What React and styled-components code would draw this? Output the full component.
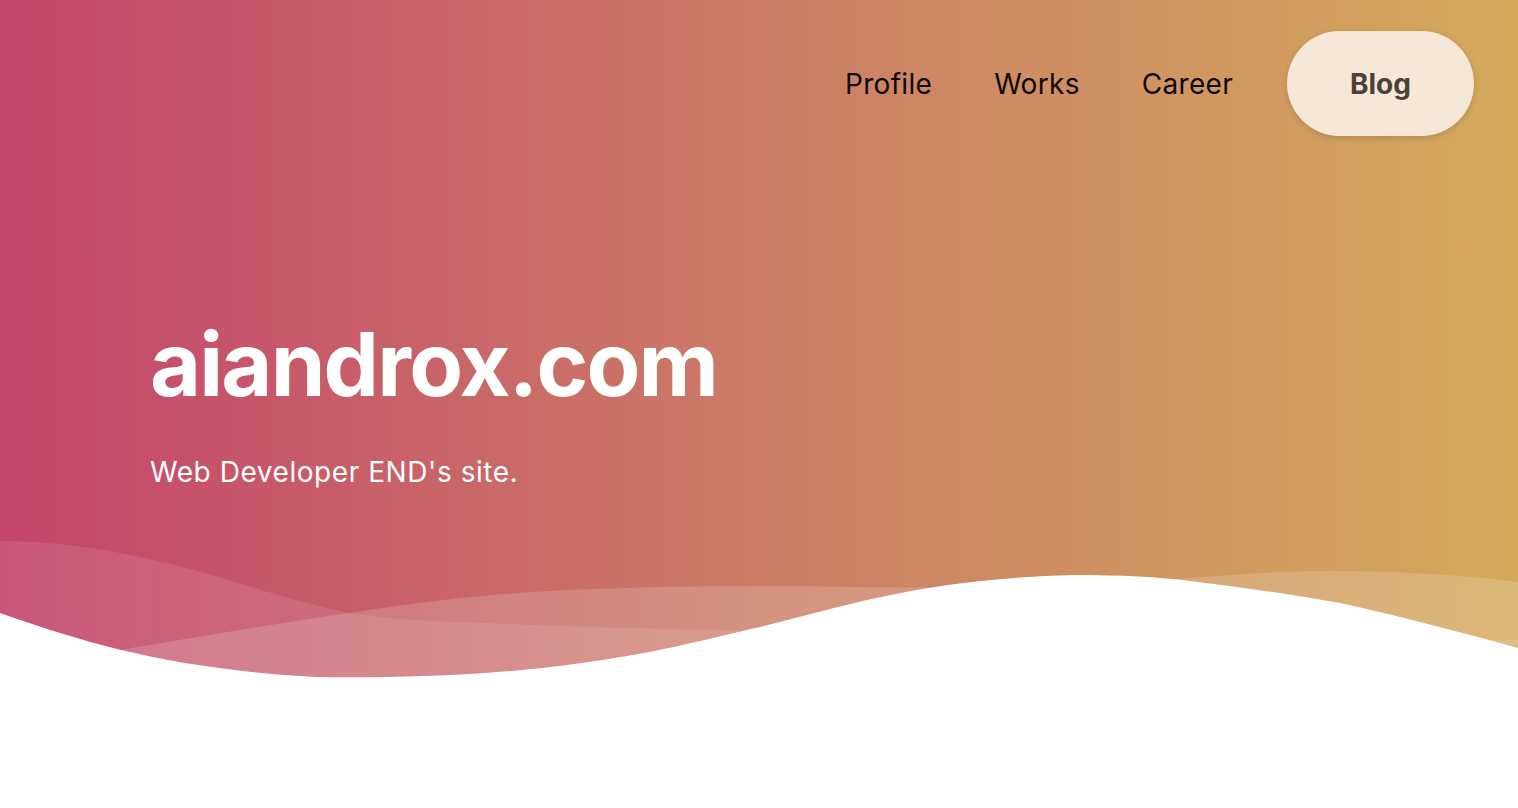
import React from 'react';
import styled, { createGlobalStyle } from 'styled-components';

const GlobalStyle = createGlobalStyle`
  body {
    margin: 0;
    background: #ffffff;
    font-family: Inter, "Noto Sans", sans-serif;
  }
`;

const Hero = styled.section`
  position: relative;
  height: 680px;
  background: linear-gradient(90deg, #c4446b 0%, #cc7c66 50%, #d4aa5c 100%);
  overflow: hidden;
`;

const Header = styled.header`
  display: flex;
  justify-content: flex-end;
  align-items: center;
  padding: 31px 44px 0 0;
`;

const Nav = styled.nav`
  display: flex;
  align-items: center;
`;

const NavLink = styled.a`
  font-size: 28px;
  line-height: 1;
  letter-spacing: 0.3px;
  color: #0a0a0a;
  text-decoration: none;
  padding: 0 31px;
`;

const BlogButton = styled.a`
  display: flex;
  align-items: center;
  justify-content: center;
  height: 105px;
  width: 187px;
  margin-left: 23px;
  border-radius: 53px;
  background: #f5e8d8;
  color: #4a4238;
  font-size: 28px;
  font-weight: 700;
  text-decoration: none;
  box-shadow: 0 2px 6px rgba(0, 0, 0, 0.15);
`;

const Intro = styled.div`
  margin-top: 184px;
  padding-left: 150px;
  color: #fff;
`;

const Title = styled.h1`
  margin: 0;
  font-size: 88px;
  line-height: 1;
  font-weight: 700;
  letter-spacing: -1.8px;
`;

const Lead = styled.p`
  margin: 50px 0 0;
  font-size: 28px;
  line-height: 1;
  letter-spacing: 0.55px;
`;

const Waves = styled.svg`
  position: absolute;
  left: 0;
  bottom: 0;
  width: 100%;
  height: 140px;
  display: block;
`;

const App = () => {
  return (
    <>
      <GlobalStyle />
      <Hero>
        <Header>
          <Nav>
            <NavLink href="#profile">Profile</NavLink>
            <NavLink href="#works">Works</NavLink>
            <NavLink href="#career">Career</NavLink>
            <BlogButton href="#blog">Blog</BlogButton>
          </Nav>
        </Header>

        <Intro>
          <Title>aiandrox.com</Title>
          <Lead>Web Developer END's site.</Lead>
        </Intro>

        {/* 波 */}
        <Waves viewBox="0 540 1518 140" preserveAspectRatio="none">
          <path
            fill="#fff"
            fillOpacity="0.1"
            d="M0,541 C60,541 130,552 194,570 C250,586 300,603 349,613 C400,620 440,622 485,623 C560,626 680,630 760,630 L1518,640 L1518,700 L0,700 Z"
          />
          <path
            fill="#fff"
            fillOpacity="0.17"
            d="M0,675 L121,650 C200,636 300,620 349,613 C420,602 480,595 533,592 C620,587 700,586 760,586 C850,586 950,590 1074,586 C1180,580 1260,570 1340,571 C1420,572 1470,576 1518,582 L1518,700 L0,700 Z"
          />
          <path
            fill="#fff"
            d="M0,613 C40,627 80,640 121,650 C180,664 250,674 315,677 C380,678 440,676 485,673 C560,668 620,658 674,647 C700,641 730,634 760,627 C800,617 840,606 876,598 C940,584 1000,577 1074,575 C1120,575 1160,577 1190,581 C1240,587 1290,594 1340,603 C1400,616 1460,632 1518,648 L1518,700 L0,700 Z"
          />
        </Waves>
      </Hero>
    </>
  );
};

export default App;
